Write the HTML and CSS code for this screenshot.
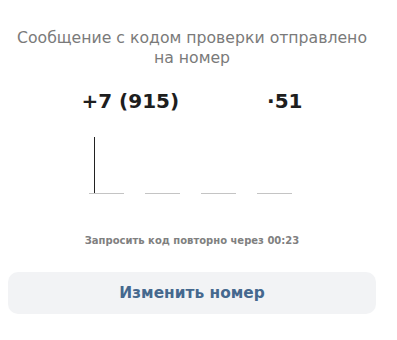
FILE: index.html
```html
<!DOCTYPE html>
<html lang="ru">
    <head>
        <meta charset="UTF-8" />
        <meta name="viewport" content="width=device-width, initial-scale=1.0" />
        <title>Код подтверждения</title>

        <link rel="stylesheet" href="styles.css">
    </head>

    <body>
        <div class="confirm">
            <p class="message">Сообщение с кодом проверки отправлено на номер</p>

            <div class="phone">
                <span>+7 (915)</span>
                <span>·51</span>
            </div>

            <div class="code">
                <div class="cell active"><span class="caret"></span></div>
                <div class="cell"></div>
                <div class="cell"></div>
                <div class="cell"></div>
            </div>

            <p class="timer">Запросить код повторно через 00:23</p>

            <button class="change">Изменить номер</button>
        </div>
    </body>
</html>
```

FILE: styles.css
```css
body {
    margin: 0;
    background-color: #ffffff;
    font-family: "DejaVu Sans", Verdana, sans-serif;
}

.confirm {
    width: 368px;
    margin-left: 8px;
    padding-top: 28px;
    display: flex;
    flex-direction: column;
    align-items: center;
}

.message {
    margin: 0;
    width: 360px;
    text-align: center;
    font-size: 15.7px;
    line-height: 20px;
    color: #7a7a7a;
}

.phone {
    margin-top: 21px;
    display: flex;
    gap: 88px;
    font-size: 20px;
    font-weight: bold;
    color: #1e1e1e;
}

.code {
    margin-top: 24px;
    margin-right: 4px;
    display: flex;
    gap: 21px;
}

.cell {
    width: 35px;
    height: 56px;
    border-bottom: 1px solid #c4c4c4;
    position: relative;
}

.caret {
    position: absolute;
    left: 5px;
    top: 0;
    bottom: 0;
    width: 1px;
    background-color: #222222;
}

.timer {
    margin: 41px 0 0;
    font-size: 10px;
    font-weight: bold;
    color: #808080;
}

.change {
    margin-top: 26px;
    width: 368px;
    height: 42px;
    border: none;
    border-radius: 10px;
    background-color: #f2f3f5;
    font-family: "DejaVu Sans", Verdana, sans-serif;
    font-size: 15.4px;
    font-weight: bold;
    color: #45688e;
}
```
